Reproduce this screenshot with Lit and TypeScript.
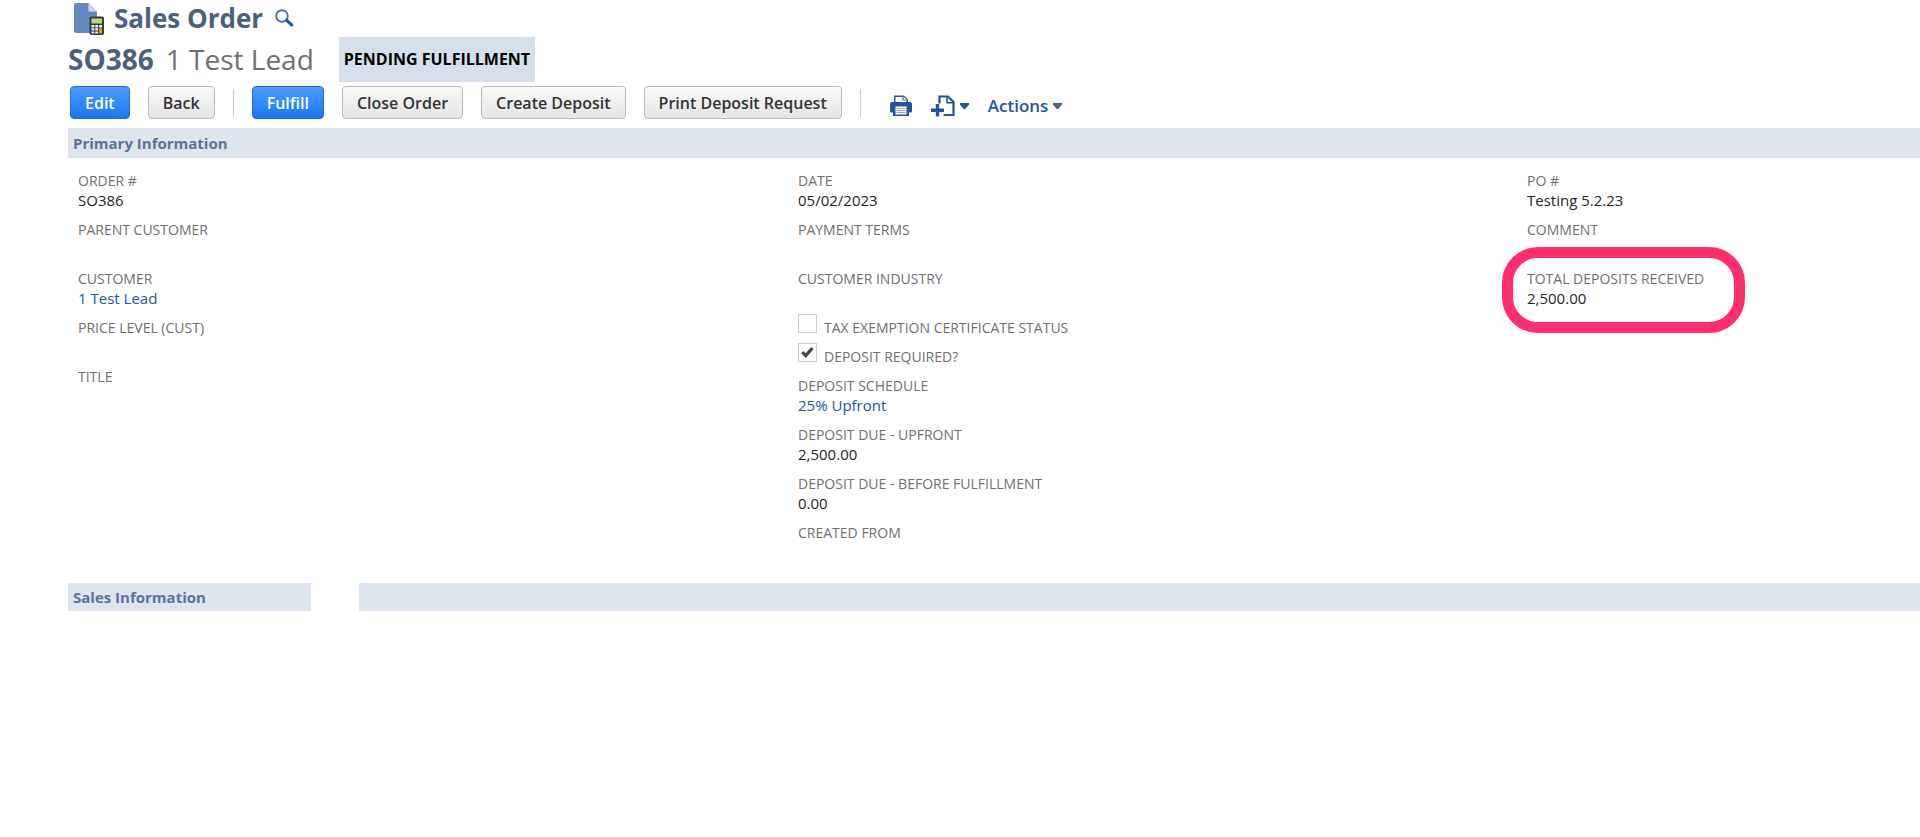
import { LitElement, html, css, nothing } from "lit";
import { customElement, property } from "lit/decorators.js";

interface Field {
  label: string;
  value?: string;
  href?: string;
  checkbox?: boolean;
  checked?: boolean;
  highlighted?: boolean;
}

const COLUMNS: Field[][] = [
  [
    { label: "Order #", value: "SO386" },
    { label: "Parent Customer" },
    { label: "Customer", value: "1 Test Lead", href: "#customer" },
    { label: "Price Level (Cust)" },
    { label: "Title" },
  ],
  [
    { label: "Date", value: "05/02/2023" },
    { label: "Payment Terms" },
    { label: "Customer Industry" },
    { label: "Tax Exemption Certificate Status", checkbox: true },
    { label: "Deposit Required?", checkbox: true, checked: true },
    { label: "Deposit Schedule", value: "25% Upfront", href: "#schedule" },
    { label: "Deposit Due - Upfront", value: "2,500.00" },
    { label: "Deposit Due - Before Fulfillment", value: "0.00" },
    { label: "Created From" },
  ],
  [
    { label: "PO #", value: "Testing 5.2.23" },
    { label: "Comment" },
    { label: "Total Deposits Received", value: "2,500.00", highlighted: true },
  ],
];

@customElement("record-field")
export class RecordField extends LitElement {
  @property({ attribute: false }) field!: Field;

  static styles = css`
    :host {
      display: block;
    }
    .field {
      position: relative;
      width: fit-content;
    }
    .label {
      display: block;
      font-size: 14px;
      line-height: 20px;
      color: #6f6f6f;
      text-transform: uppercase;
    }
    .value {
      display: block;
      min-height: 18px;
      font-size: 15px;
      line-height: 18px;
      color: #262626;
    }
    .link {
      color: #255599;
      text-decoration: none;
    }
    .check {
      display: flex;
      gap: 7px;
      height: 18px;
    }
    .box {
      appearance: none;
      box-sizing: border-box;
      flex: none;
      width: 19px;
      height: 19px;
      margin: -4px 0 0;
      border: 1px solid #cccccc;
      background: #fff;
    }
    .box:checked {
      background: #fff
        url("data:image/svg+xml,%3Csvg xmlns='http://www.w3.org/2000/svg' viewBox='0 0 17 17'%3E%3Cpath d='M3.200 8.200l3.600 3.400 6.600-7.600' fill='none' stroke='%23444' stroke-width='3.200'/%3E%3C/svg%3E")
        center / 17px 17px no-repeat;
    }
    .ring {
      position: absolute;
      inset: -22px -41px -26px -25px;
      box-sizing: border-box;
      border: 11px solid #ff2e6c;
      border-radius: 36px;
      pointer-events: none;
    }
  `;

  render() {
    const f = this.field;
    if (f.checkbox) {
      return html`<div class="check">
        <input class="box" type="checkbox" id="box" .checked=${!!f.checked} />
        <label class="label" for="box">${f.label}</label>
      </div>`;
    }
    return html`<div class="field">
      <span class="label">${f.label}</span>
      <span class="value"
        >${f.href ? html`<a class="link" href=${f.href}>${f.value}</a>` : f.value ?? nothing}</span
      >
      ${f.highlighted ? html`<div class="ring"></div>` : nothing}
    </div>`;
  }
}

@customElement("app-root")
export class AppRoot extends LitElement {
  static styles = css`
    :host {
      display: block;
      padding-left: 68px;
      overflow: hidden;
      background: #fff;
      font-family: "Open Sans", "Noto Sans", sans-serif;
    }
    svg {
      display: block;
    }
    .title-row {
      display: flex;
      align-items: center;
      padding: 0 0 1px 6px;
    }
    .title {
      margin: 0 12px 0 9px;
      font-size: 26px;
      line-height: 36px;
      font-weight: 700;
      color: #4d5f79;
    }
    .icon-button {
      display: flex;
      align-items: center;
      gap: 5px;
      padding: 0;
      border: 0;
      background: none;
      color: #255599;
      font: inherit;
      cursor: pointer;
    }
    .record-row {
      display: flex;
      align-items: center;
      height: 45px;
      font-size: 28px;
      line-height: 45px;
    }
    .number {
      font-weight: 700;
      color: #4d5f79;
    }
    .name {
      margin: 0 25px 0 12px;
      color: #6f6f6f;
    }
    .status {
      padding: 0 5px;
      background: #d5e0ec;
      color: #000;
      font-size: 16px;
      font-weight: 700;
      text-transform: uppercase;
    }
    .toolbar {
      display: flex;
      align-items: center;
      gap: 18px;
      padding: 4px 0 9px 2px;
    }
    .button {
      box-sizing: border-box;
      height: 33px;
      padding: 0 14px;
      border: 1px solid #b9b9b9;
      border-radius: 4px;
      background: linear-gradient(#fafafa, #e4e4e4);
      color: #333;
      font: 600 16px/28px "Open Sans", "Noto Sans", sans-serif;
      cursor: pointer;
    }
    .primary {
      border-color: #1f6fd6;
      background: linear-gradient(#4b9bff, #1a78f2);
      color: #fff;
    }
    .separator {
      width: 1px;
      height: 28px;
      background: #cccccc;
    }
    .tools {
      display: flex;
      align-items: center;
      gap: 19px;
      padding: 6px 0 0 11px;
    }
    .actions {
      font-size: 17px;
      line-height: 24px;
      font-weight: 600;
    }
    .section {
      display: flex;
      gap: 48px;
    }
    .heading {
      flex: 1;
      margin: 0;
      padding-left: 5px;
      background: #dfe5ef;
      color: #5a7499;
      font-size: 15px;
      line-height: 30px;
      font-weight: 700;
    }
    .heading.short {
      flex: 0 0 238px;
      line-height: 28px;
    }
    .filler {
      flex: 1;
      background: #dfe5ef;
    }
    .fields {
      display: grid;
      grid-template-columns: 720fr 729fr 393fr;
      padding: 13px 0 22px 10px;
    }
    .column {
      display: flex;
      flex-direction: column;
      gap: 11px;
    }
  `;

  private caret(fill: string) {
    return html`<svg width="9" height="6" viewBox="0 0 9 6" aria-hidden="true">
      <path d="M0 0h9v1.400L5.300 6H3.700L0 1.400z" fill=${fill} />
    </svg>`;
  }

  render() {
    return html`
      <header>
        <div class="title-row">
          <svg width="31" height="33" viewBox="0 0 31 33" aria-hidden="true">
            <path d="M2 1h12.500l8.500 8.500V31H2a2 2 0 0 1-2-2V3a2 2 0 0 1 2-2z" fill="#6688c3" />
            <path d="M14.500 1v8.500H23z" fill="#c9d6ec" />
            <rect x="15.500" y="14.500" width="14.500" height="18.500" rx="1.800" fill="#3b3b3b" />
            <rect x="17.500" y="16.500" width="10.500" height="5" fill="#b5dc86" />
            <path
              d="M17.500 23h2.800v2.500h-2.800zM21.300 23h2.800v2.500h-2.800zM25.200 23H28v2.500h-2.800zM17.500 26.300h2.800v2.300h-2.800zM21.300 26.300h2.800v2.300h-2.800zM17.500 29.400h2.800v2h-2.800zM21.300 29.400h2.800v2h-2.800z"
              fill="#eeeeee"
            />
            <path d="M25.200 26.300H28v5.100h-2.800z" fill="#f79a28" />
          </svg>
          <h1 class="title">Sales Order</h1>
          <button class="icon-button" aria-label="Search">
            <svg width="19" height="18" viewBox="0 0 19 18" aria-hidden="true">
              <circle cx="7" cy="7" r="5.800" fill="none" stroke="#4572b5" stroke-width="1.900" />
              <path d="M11.800 11.300l4.800 4.500" stroke="#255599" stroke-width="3.200" stroke-linecap="round" />
            </svg>
          </button>
        </div>
        <div class="record-row">
          <span class="number">SO386</span>
          <span class="name">1 Test Lead</span>
          <span class="status">Pending Fulfillment</span>
        </div>
        <div class="toolbar">
          <button class="button primary">Edit</button>
          <button class="button">Back</button>
          <span class="separator"></span>
          <button class="button primary">Fulfill</button>
          <button class="button">Close Order</button>
          <button class="button">Create Deposit</button>
          <button class="button">Print Deposit Request</button>
          <span class="separator"></span>
          <div class="tools">
            <button class="icon-button" aria-label="Print">
              <svg width="22" height="22" viewBox="0 0 22 22" aria-hidden="true">
                <path d="M4 7V.500h10L18 4.500V7z" fill="#255599" />
                <path d="M5.500 7V2h7v3.500h4V7z" fill="#fff" />
                <path d="M13.500 1.500v3.200h3.200z" fill="#fff" />
                <path
                  d="M2 7h18a2 2 0 0 1 2 2v7a1.500 1.500 0 0 1-1.500 1.500H19V21H3v-3.500H1.500A1.500 1.500 0 0 1 0 16V9a2 2 0 0 1 2-2z"
                  fill="#255599"
                />
                <path d="M5.500 11.500h11v8h-11z" fill="#fff" />
                <path d="M6.500 13.500h9M6.500 15.500h9M6.500 17.500h9" stroke="#8fa9cf" />
              </svg>
            </button>
            <button class="icon-button" aria-label="New record">
              <svg width="24" height="22" viewBox="0 0 24 22" aria-hidden="true">
                <path d="M8.500 8.500V1.500h8.500l5.500 5.500v13h-10" fill="none" stroke="#255599" stroke-width="2.200" />
                <path d="M16 1.500v6.200h6.500" fill="none" stroke="#255599" stroke-width="1.600" />
                <path d="M6.500 9v12.500M0 15.200h13" stroke="#255599" stroke-width="3.400" />
              </svg>
              ${this.caret("#255599")}
            </button>
            <button class="icon-button actions">Actions ${this.caret("#4d5f79")}</button>
          </div>
        </div>
      </header>
      <main>
        <div class="section"><h2 class="heading">Primary Information</h2></div>
        <div class="fields">
          ${COLUMNS.map(
            (column) => html`<div class="column">
              ${column.map((field) => html`<record-field .field=${field}></record-field>`)}
            </div>`
          )}
        </div>
        <div class="section">
          <h2 class="heading short">Sales Information</h2>
          <div class="filler"></div>
        </div>
      </main>
    `;
  }
}
